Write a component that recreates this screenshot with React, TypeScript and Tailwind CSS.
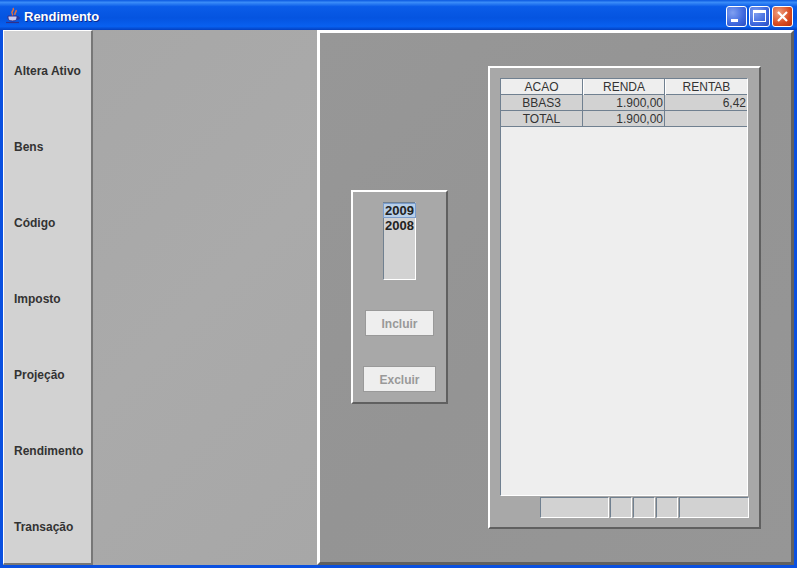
import React from "react";

const menuItems = ["Altera Ativo", "Bens", "Código", "Imposto", "Projeção", "Rendimento", "Transação"];

const JavaIcon = () => (
  <svg width="16" height="18" viewBox="0 0 16 18" className="shrink-0">
    <path d="M8 1c2 2-2 3-1 5s1 2 0 3M11 3c1 2-2 3-1 5" stroke="#e8703a" strokeWidth="1.500" fill="none" />
    <path d="M3 9h9v2c0 2-2 3-4.500 3S3 13 3 11z" fill="#c8c8f0" stroke="#30308c" />
    <path d="M12 10h2v2h-2" stroke="#30308c" fill="none" />
    <path d="M1 15.500h13" stroke="#30308c" strokeWidth="1.200" />
  </svg>
);

const WindowButton = ({ children, close }: { children: React.ReactNode; close?: boolean }) => (
  <div
    className={
      close
        ? "w-[21px] h-[21px] rounded-[3px] border border-white flex items-center justify-center bg-[radial-gradient(circle_at_30%_30%,#f0a080,#d84a20_60%,#b83010)]"
        : "w-[21px] h-[21px] rounded-[3px] border border-white flex items-center justify-center bg-[radial-gradient(circle_at_30%_30%,#7f9ff0,#3e68de_60%,#2a4cc0)]"
    }
  >
    {children}
  </div>
);

export default function App() {
  return (
    <div className="w-[797px] h-[568px] flex flex-col overflow-hidden bg-[#0a50e0] font-['Liberation_Sans',Arial,sans-serif]">
      {/* Title bar */}
      <div className="h-[30px] shrink-0 flex items-center pt-[2px] pl-[5px] pr-[4px] bg-[linear-gradient(180deg,#0a58e0_0%,#3a8cf8_8%,#0a5ce8_22%,#0554e0_60%,#0860f0_88%,#0340c0_100%)]">
        <JavaIcon />
        <span className="ml-[3px] mt-[1px] text-[13px] font-bold text-white [text-shadow:1px_1px_0_#0a2a90]">Rendimento</span>
        <div className="ml-auto flex gap-[2px]">
          <WindowButton>
            <div className="w-[7px] h-[3px] bg-white mt-[9px] mr-[5px]" />
          </WindowButton>
          <WindowButton>
            <div className="w-[13px] h-[12px] border border-white border-t-[3px]" />
          </WindowButton>
          <WindowButton close>
            <svg width="13" height="13" viewBox="0 0 13 13">
              <path d="M2 2l9 9M11 2l-9 9" stroke="white" strokeWidth="2.200" />
            </svg>
          </WindowButton>
        </div>
      </div>

      {/* Window content */}
      <div className="h-[535px] shrink-0 flex mx-[3px] bg-[#a8a8a8]">
        {/* Left menu */}
        <div className="w-[90px] h-[535px] shrink-0 flex flex-col overflow-hidden pt-[2px] bg-[#d2d2d2] border-t-[1px] border-l-[1px] border-t-white border-l-white border-r-[2px] border-b-[2px] border-r-[#777] border-b-[#777]">
          {menuItems.map((item) => (
            <div key={item} className="h-[76px] shrink-0 flex items-center pl-[10px] text-[12px] font-bold text-[#333]">
              {item}
            </div>
          ))}
        </div>

        <div className="w-[224px] shrink-0 bg-[linear-gradient(135deg,#a7a7a7,#aaaaaa_50%,#a7a7a7)]" />

        {/* Right panel */}
        <div className="flex-1 flex items-start pl-[31px] border-t-[3px] border-l-[3px] border-t-white border-l-white border-b-[3px] border-r-[3px] border-b-[#606060] border-r-[#606060] bg-[linear-gradient(135deg,#979797,#949494_50%,#969696)]">
          {/* Year list + buttons */}
          <div className="w-[97px] h-[214px] mt-[157px] shrink-0 flex flex-col items-center pt-[10px] border-t-[2px] border-l-[2px] border-t-white border-l-white border-b-[2px] border-r-[2px] border-b-[#606060] border-r-[#606060] bg-[#a8a8a8]">
            <div className="w-[33px] h-[78px] border border-[#708090] border-b-white border-r-white bg-[#d2d2d2] text-[13px] font-bold text-[#222] leading-[15px] text-center">
              <div className="bg-[#b8cfe8] border border-[#7a9ccc] h-[15px] leading-[14px] -mx-[1px]">2009</div>
              <div>2008</div>
            </div>
            <button className="w-[69px] h-[26px] mt-[30px] pt-[1px] border border-[#999] bg-[#eeeeee] text-[12px] font-bold text-[#999]">Incluir</button>
            <button className="w-[73px] h-[26px] mt-[30px] pt-[1px] border border-[#999] bg-[#eeeeee] text-[12px] font-bold text-[#999]">Excluir</button>
          </div>

          {/* Table box */}
          <div className="w-[273px] h-[463px] ml-[40px] mt-[33px] shrink-0 flex flex-col pt-[10px] pl-[10px] pr-[11px] border-t-[2px] border-l-[2px] border-t-white border-l-white border-b-[2px] border-r-[2px] border-b-[#606060] border-r-[#606060] bg-[#a8a8a8]">
            <div className="h-[418px] flex flex-col border border-[#708090] border-b-white border-r-white bg-[#eeeeee] text-[12px] text-[#333]">
              <div className="h-[16px] grid grid-cols-[82px_82px_82px] border-b border-[#708090] text-center leading-[17px]">
                <div className="border-r border-[#708090]">ACAO</div>
                <div className="border-r border-[#708090] border-l border-l-white">RENDA</div>
                <div className="border-l border-l-white">RENTAB</div>
              </div>
              <div className="h-[16px] grid grid-cols-[82px_82px_82px] bg-[#d2d2d2] border-b border-[#708090] leading-[16px]">
                <div className="border-r border-[#708090] text-center">BBAS3</div>
                <div className="border-r border-[#708090] text-right pr-[1px]">1.900,00</div>
                <div className="text-right pr-[1px]">6,42</div>
              </div>
              <div className="h-[16px] grid grid-cols-[82px_82px_82px] bg-[#d2d2d2] border-b border-[#708090] leading-[16px]">
                <div className="border-r border-[#708090] text-center">TOTAL</div>
                <div className="border-r border-[#708090] text-right pr-[1px]">1.900,00</div>
                <div />
              </div>
            </div>
            <div className="h-[21px] mt-[1px] -mr-[1px] flex justify-end gap-[1px]">
              <div className="w-[69px] border border-[#708090] border-b-white border-r-white bg-[#d2d2d2]" />
              <div className="w-[22px] border border-[#708090] border-b-white border-r-white bg-[#d2d2d2]" />
              <div className="w-[22px] border border-[#708090] border-b-white border-r-white bg-[#d2d2d2]" />
              <div className="w-[22px] border border-[#708090] border-b-white border-r-white bg-[#d2d2d2]" />
              <div className="w-[70px] border border-[#708090] border-b-white border-r-white bg-[#d2d2d2]" />
            </div>
          </div>
        </div>
      </div>
      <div className="flex-1 bg-[#0a50e0]" />
    </div>
  );
}
